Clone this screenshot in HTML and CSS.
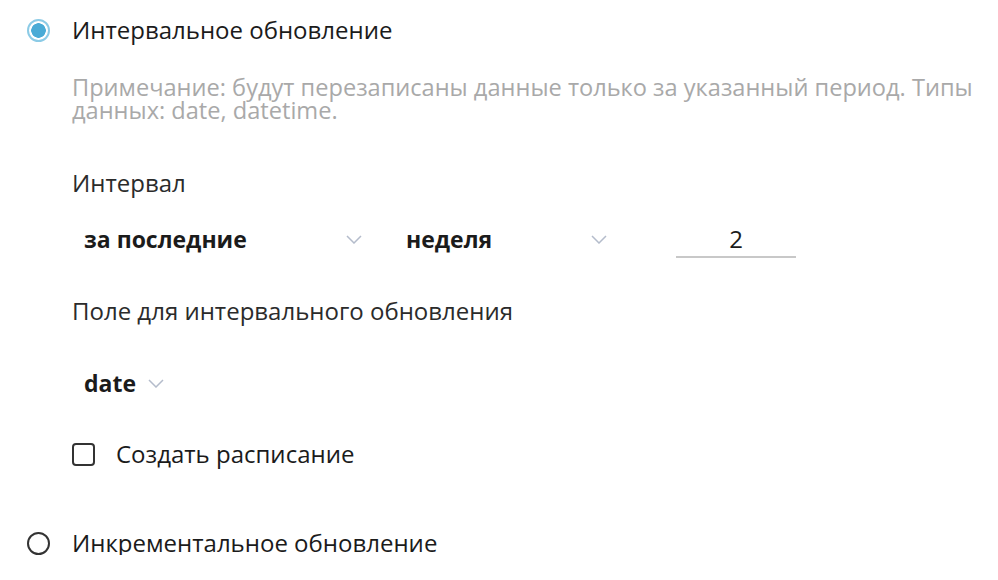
FILE: index.html
```html
<!DOCTYPE html>
<html lang="ru">

<head>
    <meta charset="UTF-8">
    <meta name="viewport" content="width=device-width, initial-scale=1.0">
    <title>Обновление</title>
    <link rel="stylesheet" href="styles.css">
</head>

<body>
    <div class="form">
        <label class="radio-row">
            <span class="radio checked"></span>
            <span class="radio-text">Интервальное обновление</span>
        </label>

        <div class="section">
            <p class="note">Примечание: будут перезаписаны данные только за указанный период. Типы данных: date, datetime.</p>

            <p class="label label-interval">Интервал</p>
            <div class="controls controls-interval">
                <div class="select select-wide">
                    <span>за последние</span>
                    <svg class="chevron" width="16" height="9" viewBox="0 0 16 9"><path d="M1 1l7 7 7-7" fill="none" stroke="#b4bccb" stroke-width="1.5"/></svg>
                </div>
                <div class="select select-mid">
                    <span>неделя</span>
                    <svg class="chevron" width="16" height="9" viewBox="0 0 16 9"><path d="M1 1l7 7 7-7" fill="none" stroke="#b4bccb" stroke-width="1.5"/></svg>
                </div>
                <div class="number">2</div>
            </div>

            <p class="label label-field">Поле для интервального обновления</p>
            <div class="controls controls-field">
                <div class="select select-auto">
                    <span>date</span>
                    <svg class="chevron" width="16" height="9" viewBox="0 0 16 9"><path d="M1 1l7 7 7-7" fill="none" stroke="#b4bccb" stroke-width="1.5"/></svg>
                </div>
            </div>

            <label class="check-row">
                <span class="checkbox"></span>
                <span>Создать расписание</span>
            </label>
        </div>

        <label class="radio-row radio-last">
            <span class="radio"></span>
            <span class="radio-text">Инкрементальное обновление</span>
        </label>
    </div>
</body>

</html>
```

FILE: styles.css
```css
* {
    margin: 0;
    padding: 0;
    box-sizing: border-box;
}

body {
    font-family: "Open Sans", "Noto Sans", sans-serif;
    color: #1b1b1b;
    background: #fff;
}

.form {
    padding: 18px 0 0 27px;
}

.radio-row {
    display: flex;
    align-items: center;
    gap: 22px;
    font-size: 24px;
    line-height: 24px;
    height: 24px;
}

.radio {
    width: 23px;
    height: 23px;
    border: 2px solid #333;
    border-radius: 50%;
    flex-shrink: 0;
}

.radio.checked {
    border-color: #8ccbe6;
    background: radial-gradient(circle, #4aabd6 0 7px, #fff 7.5px);
}

.section {
    padding-left: 45px;
}

.note {
    margin-top: 34px;
    font-size: 23.6px;
    line-height: 23px;
    color: #a9a9a9;
}

.label {
    font-size: 24px;
    line-height: 30px;
    color: #2b2b2b;
}

.label-interval {
    margin-top: 46px;
}

.controls {
    display: flex;
    align-items: center;
    height: 36px;
}

.controls-interval {
    margin-top: 23px;
}

.controls-field {
    margin-top: 39px;
}

.select {
    display: flex;
    align-items: center;
    justify-content: space-between;
    padding: 0 10px 0 12px;
    font-size: 23px;
    font-weight: 700;
    height: 36px;
}

.select-wide {
    width: 300px;
}

.select-mid {
    width: 223px;
    margin-left: 22px;
}

.select-auto {
    gap: 12px;
}

.number {
    width: 120px;
    margin-left: 59px;
    text-align: center;
    font-size: 24px;
    line-height: 30px;
    border-bottom: 2px solid #c8c8c8;
    height: 34px;
    margin-top: 4px;
}

.label-field {
    margin-top: 39px;
}

.check-row {
    display: flex;
    align-items: center;
    gap: 21px;
    font-size: 24px;
    line-height: 30px;
    height: 30px;
    margin-top: 38px;
}

.checkbox {
    width: 23px;
    height: 23px;
    border: 2px solid #333;
    border-radius: 4px;
}

.radio-last {
    margin-top: 62px;
}
```
